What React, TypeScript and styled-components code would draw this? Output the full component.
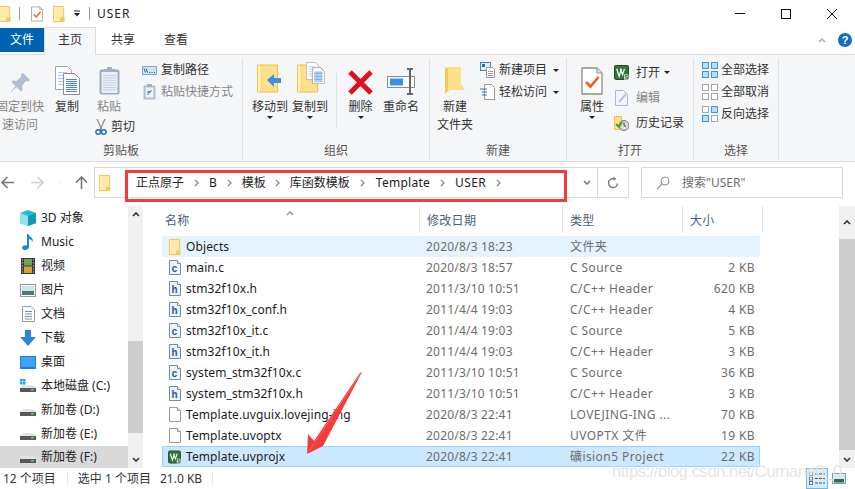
import React from "react";
import styled, { createGlobalStyle } from "styled-components";

const Global = createGlobalStyle`
  html, body { margin: 0; padding: 0; background: #fff; }
  * { box-sizing: border-box; }
`;

const Window = styled.div`
  position: relative; width: 855px; height: 489px; overflow: hidden; background: #fff;
  font-family: "Noto Sans", "Noto Sans CJK SC", sans-serif; font-size: 12px; color: #222; line-height: 1;
  display: flex; flex-direction: column;
`;
const TitleBar = styled.div`height: 27px; display: flex; align-items: center; padding-left: 0; flex: none;`;
const TitleSep = styled.div<{ $ml: number }>`width: 1px; height: 13px; background: #9a9a9a; margin-left: ${p => p.$ml}px;`;
const TitleText = styled.div`font-size: 12px; margin-left: 7px; letter-spacing: 1px; color: #222;`;
const TitleGap = styled.span<{ $w: number }>`width: ${p => p.$w}px; flex: none;`;
const WinButtons = styled.div`margin-left: auto; display: flex; align-items: center; margin-right: 0;`;
const WinBtn = styled.div`width: 46px; height: 27px; display: flex; align-items: center; justify-content: center;`;
const TabBar = styled.div`height: 28px; display: flex; align-items: flex-start; flex: none; position: relative; z-index: 1;`;
const FileTab = styled.div`width: 44px; height: 24px; margin-top: 1px; background: #0063b1; color: #fff; display: flex; align-items: center; justify-content: center; font-size: 12px;`;
const ActiveTab = styled.div`width: 52px; height: 28px; background: #f5f6f7; border: 1px solid #dadbdc; border-bottom: none; display: flex; align-items: center; justify-content: center; padding-bottom: 3px; color: #333;`;
const Tab = styled.div<{ $w: number }>`width: ${p => p.$w}px; height: 24px; margin-top: 1px; display: flex; align-items: center; justify-content: center; color: #333;`;
const TabRight = styled.div`margin-left: auto; display: flex; align-items: center; height: 24px; margin-top: 1px; gap: 12px; padding-right: 3px;`;
const Help = styled.div`width: 14px; height: 14px; border-radius: 50%; background: #0a6fc2; color: #fff; font: bold 11px "Liberation Sans", sans-serif; display: flex; align-items: center; justify-content: center;`;

const Ribbon = styled.div`height: 108px; flex: none; background: #f5f6f7; border-top: 1px solid #dadbdc; border-bottom: 1px solid #dadbdc; display: flex; margin-top: -1px;`;
const Group = styled.div<{ $w: number }>`
  width: ${p => p.$w}px; flex: none; margin: 3px 0 2px 0; display: flex; flex-direction: column;
  border-right: 1px solid #dfe0e1;
`;
const GroupBody = styled.div`flex: 1; display: flex; min-height: 0; align-items: flex-start; padding-top: 4px;`;
const GroupLabel = styled.div`height: 18px; text-align: center; color: #555; font-size: 12px; line-height: 18px; margin-bottom: -1px;`;
const Big = styled.div<{ $w: number; $ml?: number; $off?: boolean }>`
  width: ${p => p.$w}px; margin-left: ${p => p.$ml ?? 0}px; flex: none; display: flex; flex-direction: column; align-items: center;
  color: ${p => (p.$off ? "#858585" : "#333")}; white-space: nowrap; line-height: 18px;
`;
const BigIcon = styled.div`height: 33px; display: flex; align-items: flex-end; justify-content: center; margin-bottom: 3px;`;
const Muted = styled.span`color: #858585;`;
const Caret = styled.div`width: 0; height: 0; border-left: 3px solid transparent; border-right: 3px solid transparent; border-top: 3px solid #222;`;
const InlineCaret = styled(Caret)<{ $ml?: number }>`margin-left: ${p => p.$ml ?? 2}px; display: inline-block; vertical-align: middle;`;
const Cut = styled.div`display: flex; align-items: center; gap: 4px; margin: 0 0 0 3px; height: 22px; white-space: nowrap; align-self: flex-start; color: #333;`;
const SmallCol = styled.div<{ $ml: number; $row: number; $top?: number }>`
  margin-left: ${p => p.$ml}px; display: flex; flex-direction: column; margin-top: ${p => p.$top ?? 0}px;
  & > * { height: ${p => p.$row}px; }
`;
const Small = styled.div<{ $off?: boolean; $gap?: number }>`display: flex; align-items: center; gap: ${p => p.$gap ?? 4}px; white-space: nowrap; color: ${p => (p.$off ? "#858585" : "#333")};`;
const Divider = styled.div`width: 1px; height: 55px; background: #e0e1e2; margin: 11px 12px 0 6px; flex: none;`;

const NavRow = styled.div`height: 44px; flex: none; display: flex; align-items: flex-start; padding-top: 5px;`;
const NavBtns = styled.div`width: 94px; height: 30px; display: flex; align-items: center; flex: none;`;
const NavBtn = styled.div<{ $w: number }>`width: ${p => p.$w}px; display: flex; justify-content: center; flex: none;`;
const AddressBox = styled.div`width: 535px; height: 31px; border: 1px solid #d9d9d9; display: flex; align-items: center; flex: none; background: #fff;`;
const AddrIcon = styled.div`width: 24px; padding-left: 4px; display: flex; flex: none;`;
const Crumbs = styled.div`display: flex; align-items: center; margin: 1px 0 0 17px; flex: 1; color: #222;`;
const Crumb = styled.span<{ $ls?: number }>`letter-spacing: ${p => p.$ls ?? 0}px;`;
const CrumbArrow = styled.span<{ $w: number }>`width: ${p => p.$w}px; display: flex; justify-content: center;`;
const AddrTool = styled.div<{ $line?: boolean; $w: number }>`width: ${p => p.$w}px; height: 29px; display: flex; align-items: center; justify-content: center; flex: none; border-left: ${p => (p.$line ? "1px solid #d9d9d9" : "none")};`;
const SearchBox = styled.div`width: 202px; height: 31px; margin-left: 12px; border: 1px solid #d9d9d9; display: flex; align-items: center; padding-left: 14px; gap: 10px; color: #6d6d6d; flex: none;`;
const SearchText = styled.span`margin: 1px 0 0 2px;`;

const Main = styled.div`height: 262px; flex: none; display: flex;`;
const Side = styled.div`width: 128px; flex: none; display: flex; flex-direction: column;`;
const SideItem = styled.div<{ $sel?: boolean }>`height: ${p => (p.$sel ? 22 : 24)}px; flex: none; display: flex; align-items: center; padding-left: 20px; gap: 5px; white-space: nowrap; color: #222; background: ${p => (p.$sel ? "#d9d9d9" : "transparent")};`;
const SideIcon = styled.div`width: 16px; height: 16px; display: flex; align-items: center; justify-content: center; flex: none;`;
const Scroll = styled.div<{ $w: number }>`width: ${p => p.$w}px; flex: none; background: #f0f0f0; display: flex; flex-direction: column; align-items: stretch;`;
const ScrollEnd = styled.div<{ $h: number }>`height: ${p => p.$h}px; flex: none; display: flex; align-items: center; justify-content: center;`;
const ScrollGap = styled.div<{ $h: number }>`height: ${p => p.$h}px; flex: none;`;
const Thumb = styled.div`flex: 1; background: #cdcdcd;`;
const Files = styled.div`width: 696px; flex: none; padding-left: 19px; display: flex; flex-direction: column; position: relative;`;
const HeaderRow = styled.div`display: grid; grid-template-columns: 258px 143px 120px 80px; height: 27px; flex: none; margin-bottom: 3px;`;
const HeadCell = styled.div`display: flex; align-items: center; padding: 2px 0 0 7px; color: #4c607a; border-right: 1px solid #e5e5e5; height: 27px; letter-spacing: .3px;`;
const NameHead = styled(HeadCell)`padding-left: 3px;`;
const Sort = styled.div`position: absolute; left: 143px; top: 0;`;
const Row = styled.div<{ $state?: "hover" | "sel" }>`
  display: grid; grid-template-columns: 258px 143px 120px 77px; width: 598px; height: 21px; flex: none; align-items: center;
  background: ${p => (p.$state === "sel" ? "#cce8ff" : p.$state === "hover" ? "#e5f3ff" : "transparent")};
  box-shadow: ${p => (p.$state === "sel" ? "inset 0 0 0 1px #99d1ff" : "none")};
`;
const NameCell = styled.div`display: flex; align-items: center; gap: 5px; padding-left: 6px; white-space: nowrap; color: #1c1c1c; letter-spacing: .1px;`;
const Cell = styled.div`padding-left: 6px; color: #6d6d6d; white-space: nowrap; letter-spacing: .2px;`;
const TypeCell = styled(Cell)`padding-left: 7px; letter-spacing: .42px;`;
const SizeCell = styled(Cell)`text-align: right; padding: 0 5px 0 0; letter-spacing: .4px;`;
const FileIconBox = styled.div`width: 13px; height: 16px; flex: none; display: flex; align-items: center; justify-content: center;`;

const Status = styled.div`height: 21px; flex: none; display: flex; align-items: center; color: #333;`;
const StatusText = styled.span<{ $ml: number }>`margin-left: ${p => p.$ml}px; white-space: nowrap;`;
const StatusSep = styled.div<{ $ml: number }>`width: 1px; height: 13px; background: #e8e8e8; margin-left: ${p => p.$ml}px;`;
const ViewBtns = styled.div`margin-left: auto; display: flex; height: 21px; margin-right: 9px; align-items: center; gap: 4px;`;
const ViewBtn = styled.div`width: 22px; height: 21px; display: flex; align-items: center; justify-content: center; border: 1px solid #66bdf0; background: #d5ecfb;`;

const RedBox = styled.div`position: absolute; left: 125px; top: 170px; width: 442px; height: 32px; border: 3px solid #f43b3b; pointer-events: none;`;
const ArrowMark = styled.svg`position: absolute; left: 300px; top: 366px;`;
const Watermark = styled.div`position: absolute; left: 612px; top: 462px; font: 17px "Liberation Sans", sans-serif; letter-spacing: -.65px; color: rgba(195,195,195,.45); white-space: nowrap; text-shadow: 0 0 1px rgba(255,255,255,.9);`;

/* ---------- drawings ---------- */
const Folder = ({ w = 12, h = 16 }: { w?: number; h?: number }) => (
  <svg width={w} height={h} viewBox="0 0 12 16">
    <path d="M.5.5h10.200v15H.5z" fill="#ffe9a6" stroke="#eec75f" />
    <path d="M7 11.500h4.500v4H7z" fill="#f4c95a" />
    <path d="M1 1h1v14H1z" fill="#fff3c9" />
  </svg>
);
const CheckDoc = ({ w = 12, h = 16 }: { w?: number; h?: number }) => (
  <svg width={w} height={h} viewBox="0 0 22 28">
    <path d="M1 1h15l5 5v21H1z" fill="#fff" stroke="#8c8c8c" strokeWidth="1.300" />
    <path d="M16 1v5h5" fill="#e8e8e8" stroke="#8c8c8c" />
    <path d="M5 15l4.500 4.500L17.500 10" fill="none" stroke="#ee5d1e" strokeWidth="2.600" />
  </svg>
);
const Pin = () => (
  <svg width="22" height="24" viewBox="0 0 22 24">
    <path d="M14 2l7 7-2 1.500-2-.5-4 5 .5 4-1.500 1.500-4.500-4.500-7 6.500 6-7.500-4-4 1.500-1.500 3.500.5 5-4.500-.5-2z" fill="#b2bed0" />
  </svg>
);
const Lines = ({ x, y, w, n, c = "#4a90d9", s = 2 }: { x: number; y: number; w: number; n: number; c?: string; s?: number }) => (
  <g stroke={c} strokeWidth="1">
    {Array.from({ length: n }).map((_, i) => <path key={i} d={`M${x} ${y + i * s + .5}h${w}`} />)}
  </g>
);
const CopyDocs = ({ w = 25, h = 29 }: { w?: number; h?: number }) => (
  <svg width={w} height={h} viewBox="0 0 25 29">
    <path d="M.5.5h12l4 4v19H.5z" fill="#fff" stroke="#a5a5a5" />
    <Lines x={3} y={6} w={9} n={5} c="#a9ccee" s={3} />
    <path d="M8.500 7.500h11l5 5v16h-16z" fill="#fff" stroke="#8f8f8f" />
    <Lines x={11} y={13} w={11} n={7} c="#3d86ec" s={2} />
  </svg>
);
const Clipboard = () => (
  <svg width="21" height="29" viewBox="0 0 21 29">
    <rect x=".5" y="3.500" width="20" height="25" rx="2" fill="#9fadc4" />
    <rect x="2.500" y="6" width="16" height="21" fill="#eaeef6" />
    <Lines x={4} y={9} w={13} n={7} c="#c8d0e0" s={2.4} />
    <path d="M8 3V1h5v2h3v3H5V3z" fill="#a4afbf" />
  </svg>
);
const Scissors = () => (
  <svg width="12" height="16" viewBox="0 0 12 16">
    <path d="M2 0l5 11M10 0L5 11" stroke="#8a8a8a" strokeWidth="1.200" fill="none" />
    <circle cx="3.200" cy="13" r="2.300" fill="none" stroke="#1f6fc4" strokeWidth="1.400" />
    <circle cx="8.800" cy="13" r="2.300" fill="none" stroke="#1f6fc4" strokeWidth="1.400" />
  </svg>
);
const PathIcon = () => (
  <svg width="15" height="9" viewBox="0 0 15 9">
    <rect x=".5" y=".5" width="14" height="8" fill="#cfe3f7" stroke="#79a9d8" />
    <path d="M2 2.500l1.500 4M4 2.500l1.500 4" stroke="#29507e" strokeWidth=".9" />
    <path d="M7 6.500h1M9.500 6.500h1M12 6.500h1" stroke="#29507e" />
  </svg>
);
const ShortcutPaste = () => (
  <svg width="15" height="16" viewBox="-1 0 15 16">
    <rect x=".5" y="1.500" width="12" height="14" rx="1" fill="#b4bfce" />
    <rect x="2.500" y="3.500" width="8" height="10" fill="#eef1f6" />
    <path d="M4 0h5v3H4z" fill="#a4afbf" />
    <path d="M5 11V7.500h3M6 9l2.500-2.500" stroke="#6c85a5" strokeWidth="1.200" fill="none" />
  </svg>
);
const BigFolder = ({ children }: { children?: React.ReactNode }) => (
  <svg width="27" height="31" viewBox="0 0 27 31" overflow="visible">
    <path d="M.5 1h20v27H.5z" fill="#ffe08a" stroke="#eec050" />
    <path d="M1 1.500h2v26H1z" fill="#fff0bd" />
    {children}
  </svg>
);
const Keil = ({ s = 14 }: { s?: number }) => (
  <svg width={s} height={s} viewBox="0 0 14 14">
    <rect x=".5" y=".5" width="13" height="13" rx="1.500" fill="#33763d" stroke="#1f4d27" />
    <path d="M2.500 3.500l2.300 7L7 3.500M6 3.500l2 5.500 1.800-5.500" stroke="#f2f8f2" strokeWidth="1.200" fill="none" />
    <rect x="9.500" y="8.800" width="4" height="5" fill="#e8eee8" />
    <path d="M12.800 9.800H10.700v1.500h2v1.600h-2.300" stroke="#26592f" strokeWidth=".8" fill="none" />
  </svg>
);
const Grid = ({ on }: { on: boolean[] }) => (
  <svg width="16" height="16" viewBox="0 0 16 16">
    {[[0, 0], [9, 0], [0, 9], [9, 9]].map(([x, y], i) => (
      <rect key={i} x={x + .5} y={y + .5} width="6" height="6" fill={on[i] ? "#b9dcf7" : "#fff"} stroke={on[i] ? "#3a96e0" : "#a8a8a8"} />
    ))}
  </svg>
);
const Drive = ({ win }: { win?: boolean }) => (
  <svg width="16" height="14" viewBox="0 0 16 14">
    {win && <path d="M0 0h2.500v2.500H0zM3 0h2.500v2.500H3zM0 3h2.500v2.500H0zM3 3h2.500v2.500H3z" fill="#16a4e8" />}
    <path d="M2 6h12l2 3H0z" fill="#e4e4e4" />
    <rect x="0" y="9" width="16" height="4" fill="#55585c" />
    <rect x="11" y="10" width="3" height="1.500" fill="#5fd35f" />
  </svg>
);
const SrcFile = ({ l }: { l: "c" | "h" }) => (
  <svg width="12" height="15" viewBox="0 0 12 15">
    <path d="M.5.5h8l3 3v11H.5z" fill="#eef3fa" stroke="#6e8db5" />
    <path d="M8.500.5v3h3" fill="#fff" stroke="#6e8db5" />
    <text x="5.600" y="12" textAnchor="middle" fontSize="10" fontWeight="700" fontFamily="Liberation Mono, monospace" fill="#23579e">{l}</text>
  </svg>
);
const PlainFile = () => (
  <svg width="12" height="15" viewBox="0 0 12 15">
    <path d="M.5.5h8l3 3v11H.5z" fill="#fff" stroke="#9a9a9a" />
    <path d="M8.500.5v3h3" fill="#f0f0f0" stroke="#9a9a9a" />
  </svg>
);
const ChevUp = ({ c = "#333" }: { c?: string }) => <svg width="8" height="5" viewBox="0 0 8 5"><path d="M1 4l3-3 3 3" fill="none" stroke={c} strokeWidth="1.600" /></svg>;
const ChevDown = ({ c = "#333" }: { c?: string }) => <svg width="8" height="5" viewBox="0 0 8 5"><path d="M1 1l3 3 3-3" fill="none" stroke={c} strokeWidth="1.600" /></svg>;
const ChevR = () => <svg width="5" height="8" viewBox="0 0 5 8"><path d="M1 1l3 3-3 3" fill="none" stroke="#8a8a8a" strokeWidth="1.300" /></svg>;
const rot = { l: 0, r: 180, u: 90 };
const NavArrow = ({ dir, c }: { dir: "l" | "r" | "u"; c: string }) => (
  <svg width="13" height="13" viewBox="0 0 13 13">
    <g transform={`rotate(${rot[dir]} 6.500 6.500)`}>
      <path d="M1 6.500h12M6.500 1L1 6.500 6.500 12" fill="none" stroke={c} strokeWidth="1.600" />
    </g>
  </svg>
);

const rows = [
  ["f", "Objects", "2020/8/3 18:23", "文件夹", ""],
  ["c", "main.c", "2020/8/3 18:57", "C Source", "2 KB"],
  ["h", "stm32f10x.h", "2011/3/10 10:51", "C/C++ Header", "620 KB"],
  ["h", "stm32f10x_conf.h", "2011/4/4 19:03", "C/C++ Header", "4 KB"],
  ["c", "stm32f10x_it.c", "2011/4/4 19:03", "C Source", "5 KB"],
  ["h", "stm32f10x_it.h", "2011/4/4 19:03", "C/C++ Header", "3 KB"],
  ["c", "system_stm32f10x.c", "2011/3/10 10:51", "C Source", "36 KB"],
  ["h", "system_stm32f10x.h", "2011/3/10 10:51", "C/C++ Header", "3 KB"],
  ["p", "Template.uvguix.lovejing-ing", "2020/8/3 22:41", "LOVEJING-ING ...", "70 KB"],
  ["p", "Template.uvoptx", "2020/8/3 22:41", "UVOPTX 文件", "19 KB"],
  ["k", "Template.uvprojx", "2020/8/3 22:41", "礦ision5 Project", "22 KB"],
];

const FileGlyph = ({ t }: { t: string }) =>
  t === "f" ? <Folder /> : t === "c" ? <SrcFile l="c" /> : t === "h" ? <SrcFile l="h" /> : t === "p" ? <PlainFile /> : <Keil />;

const sideIcons: [React.ReactNode, string][] = [
  [<svg width="16" height="16" viewBox="0 0 16 16"><path d="M8 0l8 3v10l-8 3-8-3V3z" fill="#27bcd6" /><path d="M8 6l8-3v10l-8 3z" fill="#1497b4" /><path d="M0 3l8 3v10l-8-3z" fill="#8fe2ee" /></svg>, "3D 对象"],
  [<svg width="12" height="16" viewBox="0 0 12 16"><path d="M5 0h1.500c.5 3 5.500 3.500 4 8-.5-2-2.500-3-3.500-3v8c0 2-2 3-4 3s-3-1-3-2.200c0-1.800 3-3.200 5-2.300z" fill="#1b87dc" /></svg>, "Music"],
  [<svg width="14" height="16" viewBox="0 0 14 16"><rect width="14" height="16" fill="#3a3a3a" /><rect x="3" y="1" width="8" height="6.500" fill="#6aa84f" /><rect x="3" y="8.500" width="8" height="6.500" fill="#d9a13a" /><path d="M1 2h1M1 5h1M1 8h1M1 11h1M1 14h1M12 2h1M12 5h1M12 8h1M12 11h1M12 14h1" stroke="#ddd" /></svg>, "视频"],
  [<svg width="16" height="13" viewBox="0 0 16 13"><rect x=".5" y=".5" width="15" height="12" fill="#fff" stroke="#8d9aa8" /><rect x="2" y="2" width="12" height="5" fill="#cfe4f3" /><rect x="2" y="7" width="12" height="4" fill="#4f7d62" /></svg>, "图片"],
  [<svg width="13" height="16" viewBox="0 0 13 16"><path d="M.5.500h8.500l3.500 3.500v11.500H.5z" fill="#fff" stroke="#9a9a9a" /><Lines x={3} y={5} w={7} n={4} c="#7f8f9f" s={2.5} /></svg>, "文档"],
  [<svg width="16" height="16" viewBox="0 0 16 16"><path d="M5 0h6v7h5l-8 9-8-9h5z" fill="#2f86d6" /></svg>, "下载"],
  [<svg width="16" height="13" viewBox="0 0 16 13"><rect width="16" height="13" fill="#1a7ed4" /><rect x="1" y="1" width="14" height="10" fill="#3ea3ee" /></svg>, "桌面"],
  [<Drive win />, "本地磁盘 (C:)"],
  [<Drive />, "新加卷 (D:)"],
  [<Drive />, "新加卷 (E:)"],
];

export default function App() {
  return (
    <Window>
      <Global />
      <TitleBar>
        <svg width="11" height="16" viewBox="1 0 11 16"><path d="M.5.500h10.200v15H.5z" fill="#ffe9a6" stroke="#eec75f" /><path d="M7 11.500h4.500v4H7z" fill="#f4c95a" /></svg>
        <TitleSep $ml={8} />
        <TitleGap $w={11} />
        <CheckDoc />
        <TitleGap $w={10} />
        <Folder />
        <TitleGap $w={8} />
        <svg width="8" height="7" viewBox="0 0 8 7"><path d="M1 1h6" stroke="#222" /><path d="M1 3h6L4 6.500z" fill="#222" /></svg>
        <TitleSep $ml={8} />
        <TitleText>USER</TitleText>
        <WinButtons>
          <WinBtn><svg width="10" height="1"><rect width="10" height="1" fill="#111" /></svg></WinBtn>
          <WinBtn><svg width="10" height="10"><rect x=".5" y=".5" width="9" height="9" fill="none" stroke="#111" /></svg></WinBtn>
          <WinBtn><svg width="10" height="10"><path d="M0 0l10 10M10 0L0 10" stroke="#111" /></svg></WinBtn>
        </WinButtons>
      </TitleBar>
      <TabBar>
        <FileTab>文件</FileTab>
        <ActiveTab>主页</ActiveTab>
        <Tab $w={54}>共享</Tab>
        <Tab $w={52}>查看</Tab>
        <TabRight>
          <ChevUp c="#b5b5b5" />
          <Help>?</Help>
        </TabRight>
      </TabBar>
      <Ribbon>
        <Group $w={243}>
          <GroupBody>
            <Big $w={44} $ml={-2} $off><BigIcon><Pin /></BigIcon><span>固定到快</span><span>速访问</span></Big>
            <Big $w={50}><BigIcon><CopyDocs /></BigIcon><span>复制</span></Big>
            <Big $w={34}>
              <BigIcon><Clipboard /></BigIcon>
              <Muted>粘贴</Muted>
              <Cut><Scissors />剪切</Cut>
            </Big>
            <SmallCol $ml={16} $row={22} $top={-3}>
              <Small><PathIcon />复制路径</Small>
              <Small $off><ShortcutPaste />粘贴快捷方式</Small>
            </SmallCol>
          </GroupBody>
          <GroupLabel>剪贴板</GroupLabel>
        </Group>
        <Group $w={187}>
          <GroupBody>
            <Big $w={40} $ml={7}>
              <BigIcon><BigFolder><path d="M10 16l7-6v4h7v5h-7v4z" fill="#3a93de" /></BigFolder></BigIcon>
              <span>移动到</span><Caret />
            </Big>
            <Big $w={40}>
              <BigIcon><BigFolder><g transform="translate(9,-2) scale(.75)"><CopyDocs /></g></BigFolder></BigIcon>
              <span>复制到</span><Caret />
            </Big>
            <Divider />
            <Big $w={25} $ml={-1}>
              <BigIcon><svg width="25" height="25" viewBox="0 0 25 25"><path d="M2 2l21 21M23 2L2 23" stroke="#e01020" strokeWidth="5" /></svg></BigIcon>
              <span>删除</span><Caret />
            </Big>
            <Big $w={40} $ml={8}>
              <BigIcon>
                <svg width="29" height="27" viewBox="0 0 29 27"><rect x=".5" y="8.500" width="27" height="11" fill="#fff" stroke="#8a8a8a" /><rect x="3" y="10.500" width="13" height="7" fill="#2f93e6" /><path d="M20 1h6M23 1v25M20 26h6" stroke="#666" strokeWidth="2" /></svg>
              </BigIcon>
              <span>重命名</span>
            </Big>
          </GroupBody>
          <GroupLabel>组织</GroupLabel>
        </Group>
        <Group $w={137}>
          <GroupBody>
            <Big $w={40} $ml={5}>
              <BigIcon>
                <svg width="20" height="29" viewBox="0 0 20 29"><path d="M0 1l5 2v20l-5 5z" fill="#f4c95a" /><path d="M3 1h13v17l4 6H5L3 27z" fill="#ffe08a" /></svg>
              </BigIcon>
              <span>新建</span><span>文件夹</span>
            </Big>
            <SmallCol $ml={5} $row={22} $top={-3}>
              <Small $gap={4}>
                <svg width="15" height="16" viewBox="0 0 15 16"><rect x=".5" y=".5" width="10" height="8" fill="#dcecf8" stroke="#4682b4" /><rect x="2" y="2" width="3" height="3" fill="#2f6f9f" /><path d="M6.500 5.500h6l2 2v8h-8z" fill="#fff" stroke="#999" /><Lines x={8} y={9} w={5} n={3} c="#c88" s={2} /></svg>
                新建项目<InlineCaret />
              </Small>
              <Small $gap={4}>
                <svg width="15" height="16" viewBox="0 0 15 16"><path d="M4.500.5h7l3 3v12h-10z" fill="#fff" stroke="#999" /><path d="M0 5h7M2 8h5M2 11h5" stroke="#2f78b8" /></svg>
                轻松访问<InlineCaret />
              </Small>
            </SmallCol>
          </GroupBody>
          <GroupLabel>新建</GroupLabel>
        </Group>
        <Group $w={127}>
          <GroupBody>
            <Big $w={30} $ml={10}>
              <BigIcon><CheckDoc w={22} h={28} /></BigIcon>
              <span>属性</span><Caret />
            </Big>
            <SmallCol $ml={7} $row={25} $top={-2}>
              <Small $gap={7}><Keil s={15} />打开<InlineCaret $ml={-3} /></Small>
              <Small $gap={7} $off>
                <svg width="15" height="16" viewBox="0 0 15 16"><path d="M1.500.5h8l4 4v11h-12z" fill="#f2f5fa" stroke="#aab6cc" /><path d="M5 12l7-8" stroke="#b8c4d8" strokeWidth="2" /></svg>
                编辑
              </Small>
              <Small $gap={7}>
                <svg width="15" height="16" viewBox="0 0 15 16"><path d="M.5 1.500h7v13h-7z" fill="#ffe08a" stroke="#eec050" /><circle cx="10" cy="10.500" r="5" fill="#d9d9d9" stroke="#777" /><path d="M10 7.500v3l2 1" stroke="#444" fill="none" /><path d="M2 9l3 3 3-5" stroke="#3ea33e" strokeWidth="2" fill="none" /></svg>
                历史记录
              </Small>
            </SmallCol>
          </GroupBody>
          <GroupLabel>打开</GroupLabel>
        </Group>
        <Group $w={85}>
          <GroupBody>
            <SmallCol $ml={8} $row={22} $top={-3}>
              <Small $gap={3}><Grid on={[true, true, true, true]} />全部选择</Small>
              <Small $gap={3}><Grid on={[false, false, false, false]} />全部取消</Small>
              <Small $gap={3}><Grid on={[false, true, true, false]} />反向选择</Small>
            </SmallCol>
          </GroupBody>
          <GroupLabel>选择</GroupLabel>
        </Group>
      </Ribbon>
      <NavRow>
        <NavBtns>
          <NavBtn $w={15}><NavArrow dir="l" c="#777" /></NavBtn>
          <NavBtn $w={44}><NavArrow dir="r" c="#cfcfcf" /></NavBtn>
          <NavBtn $w={2}><ChevDown c="#999" /></NavBtn>
          <NavBtn $w={40}><NavArrow dir="u" c="#777" /></NavBtn>
        </NavBtns>
        <AddressBox>
          <AddrIcon><Folder /></AddrIcon>
          <Crumbs>
            <Crumb>正点原子</Crumb><CrumbArrow $w={25}><ChevR /></CrumbArrow>
            <Crumb>B</Crumb><CrumbArrow $w={25}><ChevR /></CrumbArrow>
            <Crumb>模板</Crumb><CrumbArrow $w={24}><ChevR /></CrumbArrow>
            <Crumb>库函数模板</Crumb><CrumbArrow $w={26}><ChevR /></CrumbArrow>
            <Crumb $ls={.25}>Template</Crumb><CrumbArrow $w={25}><ChevR /></CrumbArrow>
            <Crumb $ls={.4}>USER</Crumb><CrumbArrow $w={24}><ChevR /></CrumbArrow>
          </Crumbs>
          <AddrTool $w={20}><ChevDown c="#777" /></AddrTool>
          <AddrTool $w={31} $line>
            <svg width="12" height="12" viewBox="0 0 12 12"><path d="M10.500 6.500A4.500 4.500 0 1 1 6 1.500h2" fill="none" stroke="#777" strokeWidth="1.400" /><path d="M6.500 0l3 1.700-3 1.700z" fill="#777" /></svg>
          </AddrTool>
        </AddressBox>
        <SearchBox>
          <svg width="14" height="14" viewBox="0 0 14 14"><circle cx="9" cy="5" r="4" fill="none" stroke="#8f8f8f" /><path d="M6 8l-5 5" stroke="#b08f8f" strokeWidth="1.200" /></svg>
          <SearchText>搜索"USER"</SearchText>
        </SearchBox>
      </NavRow>
      <Main>
        <Side>
          {sideIcons.map(([ic, t]) => <SideItem key={t}><SideIcon>{ic}</SideIcon>{t}</SideItem>)}
          <SideItem $sel><SideIcon><Drive /></SideIcon>新加卷 (F:)</SideItem>
        </Side>
        <Scroll $w={15}>
          <ScrollEnd $h={17}><ChevUp /></ScrollEnd>
          <ScrollGap $h={118} />
          <Thumb />
          <ScrollGap $h={18} />
          <ScrollEnd $h={17}><ChevDown /></ScrollEnd>
        </Scroll>
        <Files>
          <Sort><ChevUp c="#999" /></Sort>
          <HeaderRow>
            <NameHead>名称</NameHead>
            <HeadCell>修改日期</HeadCell>
            <HeadCell>类型</HeadCell>
            <HeadCell>大小</HeadCell>
          </HeaderRow>
          {rows.map((r, i) => (
            <Row key={r[1]} $state={i === 0 ? "hover" : i === 10 ? "sel" : undefined}>
              <NameCell><FileIconBox><FileGlyph t={r[0]} /></FileIconBox>{r[1]}</NameCell>
              <Cell>{r[2]}</Cell>
              <TypeCell>{r[3]}</TypeCell>
              <SizeCell>{r[4]}</SizeCell>
            </Row>
          ))}
        </Files>
        <Scroll $w={16}>
          <ScrollEnd $h={33}><ChevUp /></ScrollEnd>
          <Thumb />
          <ScrollEnd $h={18}><ChevDown /></ScrollEnd>
        </Scroll>
      </Main>
      <Status>
        <StatusText $ml={3}>12 个项目</StatusText>
        <StatusSep $ml={11} />
        <StatusText $ml={10}>选中 1 个项目</StatusText>
        <StatusText $ml={9}>21.0 KB</StatusText>
        <StatusSep $ml={10} />
        <ViewBtns>
          <ViewBtn>
            <svg width="16" height="13" viewBox="0 0 16 13">
              <rect x=".5" y=".5" width="3" height="3" fill="#fff" stroke="#777" />
              <rect x=".5" y="5" width="3" height="3" fill="#fff" stroke="#777" />
              <rect x=".5" y="9.500" width="3" height="3" fill="#fff" stroke="#777" />
              <path d="M6 2h10M6 6.500h10M6 11h10" stroke="#555" strokeDasharray="3 1" />
            </svg>
          </ViewBtn>
          <svg width="14" height="11" viewBox="0 0 14 11"><rect x=".5" y=".5" width="13" height="10" fill="#d9e9f5" stroke="#8b98a8" /><rect x="2" y="6" width="10" height="3.500" fill="#2d6f55" /></svg>
        </ViewBtns>
      </Status>
      <RedBox />
      <ArrowMark width="70" height="95" viewBox="0 0 70 95">
        <path d="M62 6L7 88 8 68 14 75 60 7z" fill="#f43b3b" />
        <path d="M62 6L23 80 7 88z" fill="#f43b3b" />
      </ArrowMark>
      <Watermark>https://blog.csdn.net/Curnane0_0</Watermark>
    </Window>
  );
}
